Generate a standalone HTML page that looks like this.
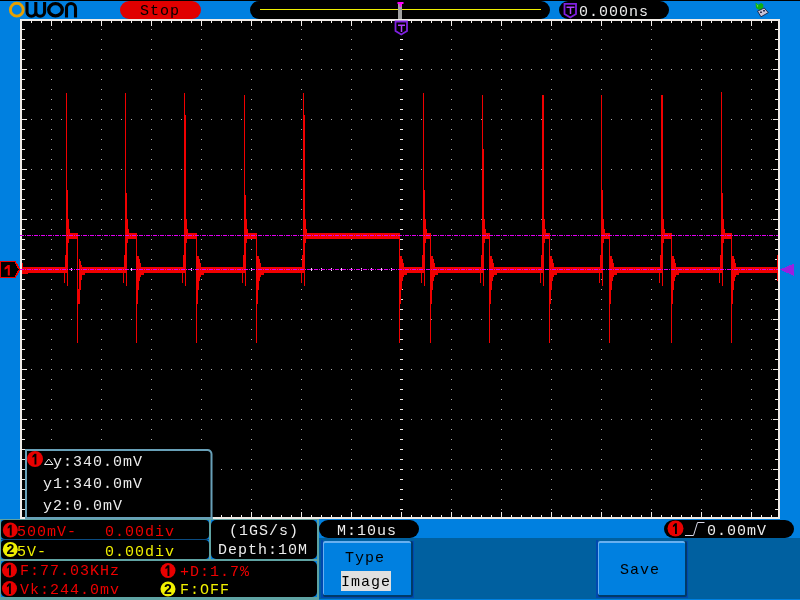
<!DOCTYPE html>
<html><head><meta charset="utf-8"><style>
html,body{margin:0;padding:0;}
body{width:800px;height:600px;overflow:hidden;background:#0080e0;position:relative;}
svg{position:absolute;left:0;top:0;}
text{font-family:"Liberation Mono",monospace;}
</style></head><body>
<svg width="800" height="600" viewBox="0 0 800 600" shape-rendering="crispEdges"><rect x="22" y="21" width="756" height="496" fill="#000" /><rect x="20" y="19" width="760" height="2" fill="#f0ece8" /><rect x="20" y="19" width="2" height="500" fill="#f0ece8" /><rect x="778" y="19" width="2" height="500" fill="#f0ece8" /><rect x="20" y="517" width="760" height="2" fill="#f0ece8" /><path d="M31 69h1v1h-1zM31 119h1v1h-1zM31 169h1v1h-1zM31 219h1v1h-1zM31 319h1v1h-1zM31 369h1v1h-1zM31 419h1v1h-1zM31 469h1v1h-1zM41 69h1v1h-1zM41 119h1v1h-1zM41 169h1v1h-1zM41 219h1v1h-1zM41 319h1v1h-1zM41 369h1v1h-1zM41 419h1v1h-1zM41 469h1v1h-1zM51 29h1v1h-1zM51 39h1v1h-1zM51 49h1v1h-1zM51 59h1v1h-1zM51 69h1v1h-1zM51 79h1v1h-1zM51 89h1v1h-1zM51 99h1v1h-1zM51 109h1v1h-1zM51 119h1v1h-1zM51 129h1v1h-1zM51 139h1v1h-1zM51 149h1v1h-1zM51 159h1v1h-1zM51 169h1v1h-1zM51 179h1v1h-1zM51 189h1v1h-1zM51 199h1v1h-1zM51 209h1v1h-1zM51 219h1v1h-1zM51 229h1v1h-1zM51 239h1v1h-1zM51 249h1v1h-1zM51 259h1v1h-1zM51 279h1v1h-1zM51 289h1v1h-1zM51 299h1v1h-1zM51 309h1v1h-1zM51 319h1v1h-1zM51 329h1v1h-1zM51 339h1v1h-1zM51 349h1v1h-1zM51 359h1v1h-1zM51 369h1v1h-1zM51 379h1v1h-1zM51 389h1v1h-1zM51 399h1v1h-1zM51 409h1v1h-1zM51 419h1v1h-1zM51 429h1v1h-1zM51 439h1v1h-1zM51 449h1v1h-1zM51 459h1v1h-1zM51 469h1v1h-1zM51 479h1v1h-1zM51 489h1v1h-1zM51 499h1v1h-1zM51 509h1v1h-1zM61 69h1v1h-1zM61 119h1v1h-1zM61 169h1v1h-1zM61 219h1v1h-1zM61 319h1v1h-1zM61 369h1v1h-1zM61 419h1v1h-1zM61 469h1v1h-1zM71 69h1v1h-1zM71 119h1v1h-1zM71 169h1v1h-1zM71 219h1v1h-1zM71 319h1v1h-1zM71 369h1v1h-1zM71 419h1v1h-1zM71 469h1v1h-1zM81 69h1v1h-1zM81 119h1v1h-1zM81 169h1v1h-1zM81 219h1v1h-1zM81 319h1v1h-1zM81 369h1v1h-1zM81 419h1v1h-1zM81 469h1v1h-1zM91 69h1v1h-1zM91 119h1v1h-1zM91 169h1v1h-1zM91 219h1v1h-1zM91 319h1v1h-1zM91 369h1v1h-1zM91 419h1v1h-1zM91 469h1v1h-1zM101 29h1v1h-1zM101 39h1v1h-1zM101 49h1v1h-1zM101 59h1v1h-1zM101 69h1v1h-1zM101 79h1v1h-1zM101 89h1v1h-1zM101 99h1v1h-1zM101 109h1v1h-1zM101 119h1v1h-1zM101 129h1v1h-1zM101 139h1v1h-1zM101 149h1v1h-1zM101 159h1v1h-1zM101 169h1v1h-1zM101 179h1v1h-1zM101 189h1v1h-1zM101 199h1v1h-1zM101 209h1v1h-1zM101 219h1v1h-1zM101 229h1v1h-1zM101 239h1v1h-1zM101 249h1v1h-1zM101 259h1v1h-1zM101 279h1v1h-1zM101 289h1v1h-1zM101 299h1v1h-1zM101 309h1v1h-1zM101 319h1v1h-1zM101 329h1v1h-1zM101 339h1v1h-1zM101 349h1v1h-1zM101 359h1v1h-1zM101 369h1v1h-1zM101 379h1v1h-1zM101 389h1v1h-1zM101 399h1v1h-1zM101 409h1v1h-1zM101 419h1v1h-1zM101 429h1v1h-1zM101 439h1v1h-1zM101 449h1v1h-1zM101 459h1v1h-1zM101 469h1v1h-1zM101 479h1v1h-1zM101 489h1v1h-1zM101 499h1v1h-1zM101 509h1v1h-1zM111 69h1v1h-1zM111 119h1v1h-1zM111 169h1v1h-1zM111 219h1v1h-1zM111 319h1v1h-1zM111 369h1v1h-1zM111 419h1v1h-1zM111 469h1v1h-1zM121 69h1v1h-1zM121 119h1v1h-1zM121 169h1v1h-1zM121 219h1v1h-1zM121 319h1v1h-1zM121 369h1v1h-1zM121 419h1v1h-1zM121 469h1v1h-1zM131 69h1v1h-1zM131 119h1v1h-1zM131 169h1v1h-1zM131 219h1v1h-1zM131 319h1v1h-1zM131 369h1v1h-1zM131 419h1v1h-1zM131 469h1v1h-1zM141 69h1v1h-1zM141 119h1v1h-1zM141 169h1v1h-1zM141 219h1v1h-1zM141 319h1v1h-1zM141 369h1v1h-1zM141 419h1v1h-1zM141 469h1v1h-1zM151 29h1v1h-1zM151 39h1v1h-1zM151 49h1v1h-1zM151 59h1v1h-1zM151 69h1v1h-1zM151 79h1v1h-1zM151 89h1v1h-1zM151 99h1v1h-1zM151 109h1v1h-1zM151 119h1v1h-1zM151 129h1v1h-1zM151 139h1v1h-1zM151 149h1v1h-1zM151 159h1v1h-1zM151 169h1v1h-1zM151 179h1v1h-1zM151 189h1v1h-1zM151 199h1v1h-1zM151 209h1v1h-1zM151 219h1v1h-1zM151 229h1v1h-1zM151 239h1v1h-1zM151 249h1v1h-1zM151 259h1v1h-1zM151 279h1v1h-1zM151 289h1v1h-1zM151 299h1v1h-1zM151 309h1v1h-1zM151 319h1v1h-1zM151 329h1v1h-1zM151 339h1v1h-1zM151 349h1v1h-1zM151 359h1v1h-1zM151 369h1v1h-1zM151 379h1v1h-1zM151 389h1v1h-1zM151 399h1v1h-1zM151 409h1v1h-1zM151 419h1v1h-1zM151 429h1v1h-1zM151 439h1v1h-1zM151 449h1v1h-1zM151 459h1v1h-1zM151 469h1v1h-1zM151 479h1v1h-1zM151 489h1v1h-1zM151 499h1v1h-1zM151 509h1v1h-1zM161 69h1v1h-1zM161 119h1v1h-1zM161 169h1v1h-1zM161 219h1v1h-1zM161 319h1v1h-1zM161 369h1v1h-1zM161 419h1v1h-1zM161 469h1v1h-1zM171 69h1v1h-1zM171 119h1v1h-1zM171 169h1v1h-1zM171 219h1v1h-1zM171 319h1v1h-1zM171 369h1v1h-1zM171 419h1v1h-1zM171 469h1v1h-1zM181 69h1v1h-1zM181 119h1v1h-1zM181 169h1v1h-1zM181 219h1v1h-1zM181 319h1v1h-1zM181 369h1v1h-1zM181 419h1v1h-1zM181 469h1v1h-1zM191 69h1v1h-1zM191 119h1v1h-1zM191 169h1v1h-1zM191 219h1v1h-1zM191 319h1v1h-1zM191 369h1v1h-1zM191 419h1v1h-1zM191 469h1v1h-1zM201 29h1v1h-1zM201 39h1v1h-1zM201 49h1v1h-1zM201 59h1v1h-1zM201 69h1v1h-1zM201 79h1v1h-1zM201 89h1v1h-1zM201 99h1v1h-1zM201 109h1v1h-1zM201 119h1v1h-1zM201 129h1v1h-1zM201 139h1v1h-1zM201 149h1v1h-1zM201 159h1v1h-1zM201 169h1v1h-1zM201 179h1v1h-1zM201 189h1v1h-1zM201 199h1v1h-1zM201 209h1v1h-1zM201 219h1v1h-1zM201 229h1v1h-1zM201 239h1v1h-1zM201 249h1v1h-1zM201 259h1v1h-1zM201 279h1v1h-1zM201 289h1v1h-1zM201 299h1v1h-1zM201 309h1v1h-1zM201 319h1v1h-1zM201 329h1v1h-1zM201 339h1v1h-1zM201 349h1v1h-1zM201 359h1v1h-1zM201 369h1v1h-1zM201 379h1v1h-1zM201 389h1v1h-1zM201 399h1v1h-1zM201 409h1v1h-1zM201 419h1v1h-1zM201 429h1v1h-1zM201 439h1v1h-1zM201 449h1v1h-1zM201 459h1v1h-1zM201 469h1v1h-1zM201 479h1v1h-1zM201 489h1v1h-1zM201 499h1v1h-1zM201 509h1v1h-1zM211 69h1v1h-1zM211 119h1v1h-1zM211 169h1v1h-1zM211 219h1v1h-1zM211 319h1v1h-1zM211 369h1v1h-1zM211 419h1v1h-1zM211 469h1v1h-1zM221 69h1v1h-1zM221 119h1v1h-1zM221 169h1v1h-1zM221 219h1v1h-1zM221 319h1v1h-1zM221 369h1v1h-1zM221 419h1v1h-1zM221 469h1v1h-1zM231 69h1v1h-1zM231 119h1v1h-1zM231 169h1v1h-1zM231 219h1v1h-1zM231 319h1v1h-1zM231 369h1v1h-1zM231 419h1v1h-1zM231 469h1v1h-1zM241 69h1v1h-1zM241 119h1v1h-1zM241 169h1v1h-1zM241 219h1v1h-1zM241 319h1v1h-1zM241 369h1v1h-1zM241 419h1v1h-1zM241 469h1v1h-1zM251 29h1v1h-1zM251 39h1v1h-1zM251 49h1v1h-1zM251 59h1v1h-1zM251 69h1v1h-1zM251 79h1v1h-1zM251 89h1v1h-1zM251 99h1v1h-1zM251 109h1v1h-1zM251 119h1v1h-1zM251 129h1v1h-1zM251 139h1v1h-1zM251 149h1v1h-1zM251 159h1v1h-1zM251 169h1v1h-1zM251 179h1v1h-1zM251 189h1v1h-1zM251 199h1v1h-1zM251 209h1v1h-1zM251 219h1v1h-1zM251 229h1v1h-1zM251 239h1v1h-1zM251 249h1v1h-1zM251 259h1v1h-1zM251 279h1v1h-1zM251 289h1v1h-1zM251 299h1v1h-1zM251 309h1v1h-1zM251 319h1v1h-1zM251 329h1v1h-1zM251 339h1v1h-1zM251 349h1v1h-1zM251 359h1v1h-1zM251 369h1v1h-1zM251 379h1v1h-1zM251 389h1v1h-1zM251 399h1v1h-1zM251 409h1v1h-1zM251 419h1v1h-1zM251 429h1v1h-1zM251 439h1v1h-1zM251 449h1v1h-1zM251 459h1v1h-1zM251 469h1v1h-1zM251 479h1v1h-1zM251 489h1v1h-1zM251 499h1v1h-1zM251 509h1v1h-1zM261 69h1v1h-1zM261 119h1v1h-1zM261 169h1v1h-1zM261 219h1v1h-1zM261 319h1v1h-1zM261 369h1v1h-1zM261 419h1v1h-1zM261 469h1v1h-1zM271 69h1v1h-1zM271 119h1v1h-1zM271 169h1v1h-1zM271 219h1v1h-1zM271 319h1v1h-1zM271 369h1v1h-1zM271 419h1v1h-1zM271 469h1v1h-1zM281 69h1v1h-1zM281 119h1v1h-1zM281 169h1v1h-1zM281 219h1v1h-1zM281 319h1v1h-1zM281 369h1v1h-1zM281 419h1v1h-1zM281 469h1v1h-1zM291 69h1v1h-1zM291 119h1v1h-1zM291 169h1v1h-1zM291 219h1v1h-1zM291 319h1v1h-1zM291 369h1v1h-1zM291 419h1v1h-1zM291 469h1v1h-1zM301 29h1v1h-1zM301 39h1v1h-1zM301 49h1v1h-1zM301 59h1v1h-1zM301 69h1v1h-1zM301 79h1v1h-1zM301 89h1v1h-1zM301 99h1v1h-1zM301 109h1v1h-1zM301 119h1v1h-1zM301 129h1v1h-1zM301 139h1v1h-1zM301 149h1v1h-1zM301 159h1v1h-1zM301 169h1v1h-1zM301 179h1v1h-1zM301 189h1v1h-1zM301 199h1v1h-1zM301 209h1v1h-1zM301 219h1v1h-1zM301 229h1v1h-1zM301 239h1v1h-1zM301 249h1v1h-1zM301 259h1v1h-1zM301 279h1v1h-1zM301 289h1v1h-1zM301 299h1v1h-1zM301 309h1v1h-1zM301 319h1v1h-1zM301 329h1v1h-1zM301 339h1v1h-1zM301 349h1v1h-1zM301 359h1v1h-1zM301 369h1v1h-1zM301 379h1v1h-1zM301 389h1v1h-1zM301 399h1v1h-1zM301 409h1v1h-1zM301 419h1v1h-1zM301 429h1v1h-1zM301 439h1v1h-1zM301 449h1v1h-1zM301 459h1v1h-1zM301 469h1v1h-1zM301 479h1v1h-1zM301 489h1v1h-1zM301 499h1v1h-1zM301 509h1v1h-1zM311 69h1v1h-1zM311 119h1v1h-1zM311 169h1v1h-1zM311 219h1v1h-1zM311 319h1v1h-1zM311 369h1v1h-1zM311 419h1v1h-1zM311 469h1v1h-1zM321 69h1v1h-1zM321 119h1v1h-1zM321 169h1v1h-1zM321 219h1v1h-1zM321 319h1v1h-1zM321 369h1v1h-1zM321 419h1v1h-1zM321 469h1v1h-1zM331 69h1v1h-1zM331 119h1v1h-1zM331 169h1v1h-1zM331 219h1v1h-1zM331 319h1v1h-1zM331 369h1v1h-1zM331 419h1v1h-1zM331 469h1v1h-1zM341 69h1v1h-1zM341 119h1v1h-1zM341 169h1v1h-1zM341 219h1v1h-1zM341 319h1v1h-1zM341 369h1v1h-1zM341 419h1v1h-1zM341 469h1v1h-1zM351 29h1v1h-1zM351 39h1v1h-1zM351 49h1v1h-1zM351 59h1v1h-1zM351 69h1v1h-1zM351 79h1v1h-1zM351 89h1v1h-1zM351 99h1v1h-1zM351 109h1v1h-1zM351 119h1v1h-1zM351 129h1v1h-1zM351 139h1v1h-1zM351 149h1v1h-1zM351 159h1v1h-1zM351 169h1v1h-1zM351 179h1v1h-1zM351 189h1v1h-1zM351 199h1v1h-1zM351 209h1v1h-1zM351 219h1v1h-1zM351 229h1v1h-1zM351 239h1v1h-1zM351 249h1v1h-1zM351 259h1v1h-1zM351 279h1v1h-1zM351 289h1v1h-1zM351 299h1v1h-1zM351 309h1v1h-1zM351 319h1v1h-1zM351 329h1v1h-1zM351 339h1v1h-1zM351 349h1v1h-1zM351 359h1v1h-1zM351 369h1v1h-1zM351 379h1v1h-1zM351 389h1v1h-1zM351 399h1v1h-1zM351 409h1v1h-1zM351 419h1v1h-1zM351 429h1v1h-1zM351 439h1v1h-1zM351 449h1v1h-1zM351 459h1v1h-1zM351 469h1v1h-1zM351 479h1v1h-1zM351 489h1v1h-1zM351 499h1v1h-1zM351 509h1v1h-1zM361 69h1v1h-1zM361 119h1v1h-1zM361 169h1v1h-1zM361 219h1v1h-1zM361 319h1v1h-1zM361 369h1v1h-1zM361 419h1v1h-1zM361 469h1v1h-1zM371 69h1v1h-1zM371 119h1v1h-1zM371 169h1v1h-1zM371 219h1v1h-1zM371 319h1v1h-1zM371 369h1v1h-1zM371 419h1v1h-1zM371 469h1v1h-1zM381 69h1v1h-1zM381 119h1v1h-1zM381 169h1v1h-1zM381 219h1v1h-1zM381 319h1v1h-1zM381 369h1v1h-1zM381 419h1v1h-1zM381 469h1v1h-1zM391 69h1v1h-1zM391 119h1v1h-1zM391 169h1v1h-1zM391 219h1v1h-1zM391 319h1v1h-1zM391 369h1v1h-1zM391 419h1v1h-1zM391 469h1v1h-1zM411 69h1v1h-1zM411 119h1v1h-1zM411 169h1v1h-1zM411 219h1v1h-1zM411 319h1v1h-1zM411 369h1v1h-1zM411 419h1v1h-1zM411 469h1v1h-1zM421 69h1v1h-1zM421 119h1v1h-1zM421 169h1v1h-1zM421 219h1v1h-1zM421 319h1v1h-1zM421 369h1v1h-1zM421 419h1v1h-1zM421 469h1v1h-1zM431 69h1v1h-1zM431 119h1v1h-1zM431 169h1v1h-1zM431 219h1v1h-1zM431 319h1v1h-1zM431 369h1v1h-1zM431 419h1v1h-1zM431 469h1v1h-1zM441 69h1v1h-1zM441 119h1v1h-1zM441 169h1v1h-1zM441 219h1v1h-1zM441 319h1v1h-1zM441 369h1v1h-1zM441 419h1v1h-1zM441 469h1v1h-1zM451 29h1v1h-1zM451 39h1v1h-1zM451 49h1v1h-1zM451 59h1v1h-1zM451 69h1v1h-1zM451 79h1v1h-1zM451 89h1v1h-1zM451 99h1v1h-1zM451 109h1v1h-1zM451 119h1v1h-1zM451 129h1v1h-1zM451 139h1v1h-1zM451 149h1v1h-1zM451 159h1v1h-1zM451 169h1v1h-1zM451 179h1v1h-1zM451 189h1v1h-1zM451 199h1v1h-1zM451 209h1v1h-1zM451 219h1v1h-1zM451 229h1v1h-1zM451 239h1v1h-1zM451 249h1v1h-1zM451 259h1v1h-1zM451 279h1v1h-1zM451 289h1v1h-1zM451 299h1v1h-1zM451 309h1v1h-1zM451 319h1v1h-1zM451 329h1v1h-1zM451 339h1v1h-1zM451 349h1v1h-1zM451 359h1v1h-1zM451 369h1v1h-1zM451 379h1v1h-1zM451 389h1v1h-1zM451 399h1v1h-1zM451 409h1v1h-1zM451 419h1v1h-1zM451 429h1v1h-1zM451 439h1v1h-1zM451 449h1v1h-1zM451 459h1v1h-1zM451 469h1v1h-1zM451 479h1v1h-1zM451 489h1v1h-1zM451 499h1v1h-1zM451 509h1v1h-1zM461 69h1v1h-1zM461 119h1v1h-1zM461 169h1v1h-1zM461 219h1v1h-1zM461 319h1v1h-1zM461 369h1v1h-1zM461 419h1v1h-1zM461 469h1v1h-1zM471 69h1v1h-1zM471 119h1v1h-1zM471 169h1v1h-1zM471 219h1v1h-1zM471 319h1v1h-1zM471 369h1v1h-1zM471 419h1v1h-1zM471 469h1v1h-1zM481 69h1v1h-1zM481 119h1v1h-1zM481 169h1v1h-1zM481 219h1v1h-1zM481 319h1v1h-1zM481 369h1v1h-1zM481 419h1v1h-1zM481 469h1v1h-1zM491 69h1v1h-1zM491 119h1v1h-1zM491 169h1v1h-1zM491 219h1v1h-1zM491 319h1v1h-1zM491 369h1v1h-1zM491 419h1v1h-1zM491 469h1v1h-1zM501 29h1v1h-1zM501 39h1v1h-1zM501 49h1v1h-1zM501 59h1v1h-1zM501 69h1v1h-1zM501 79h1v1h-1zM501 89h1v1h-1zM501 99h1v1h-1zM501 109h1v1h-1zM501 119h1v1h-1zM501 129h1v1h-1zM501 139h1v1h-1zM501 149h1v1h-1zM501 159h1v1h-1zM501 169h1v1h-1zM501 179h1v1h-1zM501 189h1v1h-1zM501 199h1v1h-1zM501 209h1v1h-1zM501 219h1v1h-1zM501 229h1v1h-1zM501 239h1v1h-1zM501 249h1v1h-1zM501 259h1v1h-1zM501 279h1v1h-1zM501 289h1v1h-1zM501 299h1v1h-1zM501 309h1v1h-1zM501 319h1v1h-1zM501 329h1v1h-1zM501 339h1v1h-1zM501 349h1v1h-1zM501 359h1v1h-1zM501 369h1v1h-1zM501 379h1v1h-1zM501 389h1v1h-1zM501 399h1v1h-1zM501 409h1v1h-1zM501 419h1v1h-1zM501 429h1v1h-1zM501 439h1v1h-1zM501 449h1v1h-1zM501 459h1v1h-1zM501 469h1v1h-1zM501 479h1v1h-1zM501 489h1v1h-1zM501 499h1v1h-1zM501 509h1v1h-1zM511 69h1v1h-1zM511 119h1v1h-1zM511 169h1v1h-1zM511 219h1v1h-1zM511 319h1v1h-1zM511 369h1v1h-1zM511 419h1v1h-1zM511 469h1v1h-1zM521 69h1v1h-1zM521 119h1v1h-1zM521 169h1v1h-1zM521 219h1v1h-1zM521 319h1v1h-1zM521 369h1v1h-1zM521 419h1v1h-1zM521 469h1v1h-1zM531 69h1v1h-1zM531 119h1v1h-1zM531 169h1v1h-1zM531 219h1v1h-1zM531 319h1v1h-1zM531 369h1v1h-1zM531 419h1v1h-1zM531 469h1v1h-1zM541 69h1v1h-1zM541 119h1v1h-1zM541 169h1v1h-1zM541 219h1v1h-1zM541 319h1v1h-1zM541 369h1v1h-1zM541 419h1v1h-1zM541 469h1v1h-1zM551 29h1v1h-1zM551 39h1v1h-1zM551 49h1v1h-1zM551 59h1v1h-1zM551 69h1v1h-1zM551 79h1v1h-1zM551 89h1v1h-1zM551 99h1v1h-1zM551 109h1v1h-1zM551 119h1v1h-1zM551 129h1v1h-1zM551 139h1v1h-1zM551 149h1v1h-1zM551 159h1v1h-1zM551 169h1v1h-1zM551 179h1v1h-1zM551 189h1v1h-1zM551 199h1v1h-1zM551 209h1v1h-1zM551 219h1v1h-1zM551 229h1v1h-1zM551 239h1v1h-1zM551 249h1v1h-1zM551 259h1v1h-1zM551 279h1v1h-1zM551 289h1v1h-1zM551 299h1v1h-1zM551 309h1v1h-1zM551 319h1v1h-1zM551 329h1v1h-1zM551 339h1v1h-1zM551 349h1v1h-1zM551 359h1v1h-1zM551 369h1v1h-1zM551 379h1v1h-1zM551 389h1v1h-1zM551 399h1v1h-1zM551 409h1v1h-1zM551 419h1v1h-1zM551 429h1v1h-1zM551 439h1v1h-1zM551 449h1v1h-1zM551 459h1v1h-1zM551 469h1v1h-1zM551 479h1v1h-1zM551 489h1v1h-1zM551 499h1v1h-1zM551 509h1v1h-1zM561 69h1v1h-1zM561 119h1v1h-1zM561 169h1v1h-1zM561 219h1v1h-1zM561 319h1v1h-1zM561 369h1v1h-1zM561 419h1v1h-1zM561 469h1v1h-1zM571 69h1v1h-1zM571 119h1v1h-1zM571 169h1v1h-1zM571 219h1v1h-1zM571 319h1v1h-1zM571 369h1v1h-1zM571 419h1v1h-1zM571 469h1v1h-1zM581 69h1v1h-1zM581 119h1v1h-1zM581 169h1v1h-1zM581 219h1v1h-1zM581 319h1v1h-1zM581 369h1v1h-1zM581 419h1v1h-1zM581 469h1v1h-1zM591 69h1v1h-1zM591 119h1v1h-1zM591 169h1v1h-1zM591 219h1v1h-1zM591 319h1v1h-1zM591 369h1v1h-1zM591 419h1v1h-1zM591 469h1v1h-1zM601 29h1v1h-1zM601 39h1v1h-1zM601 49h1v1h-1zM601 59h1v1h-1zM601 69h1v1h-1zM601 79h1v1h-1zM601 89h1v1h-1zM601 99h1v1h-1zM601 109h1v1h-1zM601 119h1v1h-1zM601 129h1v1h-1zM601 139h1v1h-1zM601 149h1v1h-1zM601 159h1v1h-1zM601 169h1v1h-1zM601 179h1v1h-1zM601 189h1v1h-1zM601 199h1v1h-1zM601 209h1v1h-1zM601 219h1v1h-1zM601 229h1v1h-1zM601 239h1v1h-1zM601 249h1v1h-1zM601 259h1v1h-1zM601 279h1v1h-1zM601 289h1v1h-1zM601 299h1v1h-1zM601 309h1v1h-1zM601 319h1v1h-1zM601 329h1v1h-1zM601 339h1v1h-1zM601 349h1v1h-1zM601 359h1v1h-1zM601 369h1v1h-1zM601 379h1v1h-1zM601 389h1v1h-1zM601 399h1v1h-1zM601 409h1v1h-1zM601 419h1v1h-1zM601 429h1v1h-1zM601 439h1v1h-1zM601 449h1v1h-1zM601 459h1v1h-1zM601 469h1v1h-1zM601 479h1v1h-1zM601 489h1v1h-1zM601 499h1v1h-1zM601 509h1v1h-1zM611 69h1v1h-1zM611 119h1v1h-1zM611 169h1v1h-1zM611 219h1v1h-1zM611 319h1v1h-1zM611 369h1v1h-1zM611 419h1v1h-1zM611 469h1v1h-1zM621 69h1v1h-1zM621 119h1v1h-1zM621 169h1v1h-1zM621 219h1v1h-1zM621 319h1v1h-1zM621 369h1v1h-1zM621 419h1v1h-1zM621 469h1v1h-1zM631 69h1v1h-1zM631 119h1v1h-1zM631 169h1v1h-1zM631 219h1v1h-1zM631 319h1v1h-1zM631 369h1v1h-1zM631 419h1v1h-1zM631 469h1v1h-1zM641 69h1v1h-1zM641 119h1v1h-1zM641 169h1v1h-1zM641 219h1v1h-1zM641 319h1v1h-1zM641 369h1v1h-1zM641 419h1v1h-1zM641 469h1v1h-1zM651 29h1v1h-1zM651 39h1v1h-1zM651 49h1v1h-1zM651 59h1v1h-1zM651 69h1v1h-1zM651 79h1v1h-1zM651 89h1v1h-1zM651 99h1v1h-1zM651 109h1v1h-1zM651 119h1v1h-1zM651 129h1v1h-1zM651 139h1v1h-1zM651 149h1v1h-1zM651 159h1v1h-1zM651 169h1v1h-1zM651 179h1v1h-1zM651 189h1v1h-1zM651 199h1v1h-1zM651 209h1v1h-1zM651 219h1v1h-1zM651 229h1v1h-1zM651 239h1v1h-1zM651 249h1v1h-1zM651 259h1v1h-1zM651 279h1v1h-1zM651 289h1v1h-1zM651 299h1v1h-1zM651 309h1v1h-1zM651 319h1v1h-1zM651 329h1v1h-1zM651 339h1v1h-1zM651 349h1v1h-1zM651 359h1v1h-1zM651 369h1v1h-1zM651 379h1v1h-1zM651 389h1v1h-1zM651 399h1v1h-1zM651 409h1v1h-1zM651 419h1v1h-1zM651 429h1v1h-1zM651 439h1v1h-1zM651 449h1v1h-1zM651 459h1v1h-1zM651 469h1v1h-1zM651 479h1v1h-1zM651 489h1v1h-1zM651 499h1v1h-1zM651 509h1v1h-1zM661 69h1v1h-1zM661 119h1v1h-1zM661 169h1v1h-1zM661 219h1v1h-1zM661 319h1v1h-1zM661 369h1v1h-1zM661 419h1v1h-1zM661 469h1v1h-1zM671 69h1v1h-1zM671 119h1v1h-1zM671 169h1v1h-1zM671 219h1v1h-1zM671 319h1v1h-1zM671 369h1v1h-1zM671 419h1v1h-1zM671 469h1v1h-1zM681 69h1v1h-1zM681 119h1v1h-1zM681 169h1v1h-1zM681 219h1v1h-1zM681 319h1v1h-1zM681 369h1v1h-1zM681 419h1v1h-1zM681 469h1v1h-1zM691 69h1v1h-1zM691 119h1v1h-1zM691 169h1v1h-1zM691 219h1v1h-1zM691 319h1v1h-1zM691 369h1v1h-1zM691 419h1v1h-1zM691 469h1v1h-1zM701 29h1v1h-1zM701 39h1v1h-1zM701 49h1v1h-1zM701 59h1v1h-1zM701 69h1v1h-1zM701 79h1v1h-1zM701 89h1v1h-1zM701 99h1v1h-1zM701 109h1v1h-1zM701 119h1v1h-1zM701 129h1v1h-1zM701 139h1v1h-1zM701 149h1v1h-1zM701 159h1v1h-1zM701 169h1v1h-1zM701 179h1v1h-1zM701 189h1v1h-1zM701 199h1v1h-1zM701 209h1v1h-1zM701 219h1v1h-1zM701 229h1v1h-1zM701 239h1v1h-1zM701 249h1v1h-1zM701 259h1v1h-1zM701 279h1v1h-1zM701 289h1v1h-1zM701 299h1v1h-1zM701 309h1v1h-1zM701 319h1v1h-1zM701 329h1v1h-1zM701 339h1v1h-1zM701 349h1v1h-1zM701 359h1v1h-1zM701 369h1v1h-1zM701 379h1v1h-1zM701 389h1v1h-1zM701 399h1v1h-1zM701 409h1v1h-1zM701 419h1v1h-1zM701 429h1v1h-1zM701 439h1v1h-1zM701 449h1v1h-1zM701 459h1v1h-1zM701 469h1v1h-1zM701 479h1v1h-1zM701 489h1v1h-1zM701 499h1v1h-1zM701 509h1v1h-1zM711 69h1v1h-1zM711 119h1v1h-1zM711 169h1v1h-1zM711 219h1v1h-1zM711 319h1v1h-1zM711 369h1v1h-1zM711 419h1v1h-1zM711 469h1v1h-1zM721 69h1v1h-1zM721 119h1v1h-1zM721 169h1v1h-1zM721 219h1v1h-1zM721 319h1v1h-1zM721 369h1v1h-1zM721 419h1v1h-1zM721 469h1v1h-1zM731 69h1v1h-1zM731 119h1v1h-1zM731 169h1v1h-1zM731 219h1v1h-1zM731 319h1v1h-1zM731 369h1v1h-1zM731 419h1v1h-1zM731 469h1v1h-1zM741 69h1v1h-1zM741 119h1v1h-1zM741 169h1v1h-1zM741 219h1v1h-1zM741 319h1v1h-1zM741 369h1v1h-1zM741 419h1v1h-1zM741 469h1v1h-1zM751 29h1v1h-1zM751 39h1v1h-1zM751 49h1v1h-1zM751 59h1v1h-1zM751 69h1v1h-1zM751 79h1v1h-1zM751 89h1v1h-1zM751 99h1v1h-1zM751 109h1v1h-1zM751 119h1v1h-1zM751 129h1v1h-1zM751 139h1v1h-1zM751 149h1v1h-1zM751 159h1v1h-1zM751 169h1v1h-1zM751 179h1v1h-1zM751 189h1v1h-1zM751 199h1v1h-1zM751 209h1v1h-1zM751 219h1v1h-1zM751 229h1v1h-1zM751 239h1v1h-1zM751 249h1v1h-1zM751 259h1v1h-1zM751 279h1v1h-1zM751 289h1v1h-1zM751 299h1v1h-1zM751 309h1v1h-1zM751 319h1v1h-1zM751 329h1v1h-1zM751 339h1v1h-1zM751 349h1v1h-1zM751 359h1v1h-1zM751 369h1v1h-1zM751 379h1v1h-1zM751 389h1v1h-1zM751 399h1v1h-1zM751 409h1v1h-1zM751 419h1v1h-1zM751 429h1v1h-1zM751 439h1v1h-1zM751 449h1v1h-1zM751 459h1v1h-1zM751 469h1v1h-1zM751 479h1v1h-1zM751 489h1v1h-1zM751 499h1v1h-1zM751 509h1v1h-1zM761 69h1v1h-1zM761 119h1v1h-1zM761 169h1v1h-1zM761 219h1v1h-1zM761 319h1v1h-1zM761 369h1v1h-1zM761 419h1v1h-1zM761 469h1v1h-1zM771 69h1v1h-1zM771 119h1v1h-1zM771 169h1v1h-1zM771 219h1v1h-1zM771 319h1v1h-1zM771 369h1v1h-1zM771 419h1v1h-1zM771 469h1v1h-1z" fill="#a8a8a8"/><path d="M31 21h1v2h-1zM31 515h1v2h-1zM41 21h1v2h-1zM41 515h1v2h-1zM51 21h1v5h-1zM51 512h1v5h-1zM61 21h1v2h-1zM61 515h1v2h-1zM71 21h1v2h-1zM71 515h1v2h-1zM81 21h1v2h-1zM81 515h1v2h-1zM91 21h1v2h-1zM91 515h1v2h-1zM101 21h1v5h-1zM101 512h1v5h-1zM111 21h1v2h-1zM111 515h1v2h-1zM121 21h1v2h-1zM121 515h1v2h-1zM131 21h1v2h-1zM131 515h1v2h-1zM141 21h1v2h-1zM141 515h1v2h-1zM151 21h1v5h-1zM151 512h1v5h-1zM161 21h1v2h-1zM161 515h1v2h-1zM171 21h1v2h-1zM171 515h1v2h-1zM181 21h1v2h-1zM181 515h1v2h-1zM191 21h1v2h-1zM191 515h1v2h-1zM201 21h1v5h-1zM201 512h1v5h-1zM211 21h1v2h-1zM211 515h1v2h-1zM221 21h1v2h-1zM221 515h1v2h-1zM231 21h1v2h-1zM231 515h1v2h-1zM241 21h1v2h-1zM241 515h1v2h-1zM251 21h1v5h-1zM251 512h1v5h-1zM261 21h1v2h-1zM261 515h1v2h-1zM271 21h1v2h-1zM271 515h1v2h-1zM281 21h1v2h-1zM281 515h1v2h-1zM291 21h1v2h-1zM291 515h1v2h-1zM301 21h1v5h-1zM301 512h1v5h-1zM311 21h1v2h-1zM311 515h1v2h-1zM321 21h1v2h-1zM321 515h1v2h-1zM331 21h1v2h-1zM331 515h1v2h-1zM341 21h1v2h-1zM341 515h1v2h-1zM351 21h1v5h-1zM351 512h1v5h-1zM361 21h1v2h-1zM361 515h1v2h-1zM371 21h1v2h-1zM371 515h1v2h-1zM381 21h1v2h-1zM381 515h1v2h-1zM391 21h1v2h-1zM391 515h1v2h-1zM401 21h1v5h-1zM401 512h1v5h-1zM411 21h1v2h-1zM411 515h1v2h-1zM421 21h1v2h-1zM421 515h1v2h-1zM431 21h1v2h-1zM431 515h1v2h-1zM441 21h1v2h-1zM441 515h1v2h-1zM451 21h1v5h-1zM451 512h1v5h-1zM461 21h1v2h-1zM461 515h1v2h-1zM471 21h1v2h-1zM471 515h1v2h-1zM481 21h1v2h-1zM481 515h1v2h-1zM491 21h1v2h-1zM491 515h1v2h-1zM501 21h1v5h-1zM501 512h1v5h-1zM511 21h1v2h-1zM511 515h1v2h-1zM521 21h1v2h-1zM521 515h1v2h-1zM531 21h1v2h-1zM531 515h1v2h-1zM541 21h1v2h-1zM541 515h1v2h-1zM551 21h1v5h-1zM551 512h1v5h-1zM561 21h1v2h-1zM561 515h1v2h-1zM571 21h1v2h-1zM571 515h1v2h-1zM581 21h1v2h-1zM581 515h1v2h-1zM591 21h1v2h-1zM591 515h1v2h-1zM601 21h1v5h-1zM601 512h1v5h-1zM611 21h1v2h-1zM611 515h1v2h-1zM621 21h1v2h-1zM621 515h1v2h-1zM631 21h1v2h-1zM631 515h1v2h-1zM641 21h1v2h-1zM641 515h1v2h-1zM651 21h1v5h-1zM651 512h1v5h-1zM661 21h1v2h-1zM661 515h1v2h-1zM671 21h1v2h-1zM671 515h1v2h-1zM681 21h1v2h-1zM681 515h1v2h-1zM691 21h1v2h-1zM691 515h1v2h-1zM701 21h1v5h-1zM701 512h1v5h-1zM711 21h1v2h-1zM711 515h1v2h-1zM721 21h1v2h-1zM721 515h1v2h-1zM731 21h1v2h-1zM731 515h1v2h-1zM741 21h1v2h-1zM741 515h1v2h-1zM751 21h1v5h-1zM751 512h1v5h-1zM761 21h1v2h-1zM761 515h1v2h-1zM771 21h1v2h-1zM771 515h1v2h-1zM22 29h3v1h-3zM775 29h3v1h-3zM22 39h3v1h-3zM775 39h3v1h-3zM22 49h3v1h-3zM775 49h3v1h-3zM22 59h3v1h-3zM775 59h3v1h-3zM22 69h5v1h-5zM773 69h5v1h-5zM22 79h3v1h-3zM775 79h3v1h-3zM22 89h3v1h-3zM775 89h3v1h-3zM22 99h3v1h-3zM775 99h3v1h-3zM22 109h3v1h-3zM775 109h3v1h-3zM22 119h5v1h-5zM773 119h5v1h-5zM22 129h3v1h-3zM775 129h3v1h-3zM22 139h3v1h-3zM775 139h3v1h-3zM22 149h3v1h-3zM775 149h3v1h-3zM22 159h3v1h-3zM775 159h3v1h-3zM22 169h5v1h-5zM773 169h5v1h-5zM22 179h3v1h-3zM775 179h3v1h-3zM22 189h3v1h-3zM775 189h3v1h-3zM22 199h3v1h-3zM775 199h3v1h-3zM22 209h3v1h-3zM775 209h3v1h-3zM22 219h5v1h-5zM773 219h5v1h-5zM22 229h3v1h-3zM775 229h3v1h-3zM22 239h3v1h-3zM775 239h3v1h-3zM22 249h3v1h-3zM775 249h3v1h-3zM22 259h3v1h-3zM775 259h3v1h-3zM22 269h5v1h-5zM773 269h5v1h-5zM22 279h3v1h-3zM775 279h3v1h-3zM22 289h3v1h-3zM775 289h3v1h-3zM22 299h3v1h-3zM775 299h3v1h-3zM22 309h3v1h-3zM775 309h3v1h-3zM22 319h5v1h-5zM773 319h5v1h-5zM22 329h3v1h-3zM775 329h3v1h-3zM22 339h3v1h-3zM775 339h3v1h-3zM22 349h3v1h-3zM775 349h3v1h-3zM22 359h3v1h-3zM775 359h3v1h-3zM22 369h5v1h-5zM773 369h5v1h-5zM22 379h3v1h-3zM775 379h3v1h-3zM22 389h3v1h-3zM775 389h3v1h-3zM22 399h3v1h-3zM775 399h3v1h-3zM22 409h3v1h-3zM775 409h3v1h-3zM22 419h5v1h-5zM773 419h5v1h-5zM22 429h3v1h-3zM775 429h3v1h-3zM22 439h3v1h-3zM775 439h3v1h-3zM22 449h3v1h-3zM775 449h3v1h-3zM22 459h3v1h-3zM775 459h3v1h-3zM22 469h5v1h-5zM773 469h5v1h-5zM22 479h3v1h-3zM775 479h3v1h-3zM22 489h3v1h-3zM775 489h3v1h-3zM22 499h3v1h-3zM775 499h3v1h-3zM22 509h3v1h-3zM775 509h3v1h-3zM400 29h3v1h-3zM400 39h3v1h-3zM400 49h3v1h-3zM400 59h3v1h-3zM400 69h3v1h-3zM400 79h3v1h-3zM400 89h3v1h-3zM400 99h3v1h-3zM400 109h3v1h-3zM400 119h3v1h-3zM400 129h3v1h-3zM400 139h3v1h-3zM400 149h3v1h-3zM400 159h3v1h-3zM400 169h3v1h-3zM400 179h3v1h-3zM400 189h3v1h-3zM400 199h3v1h-3zM400 209h3v1h-3zM400 219h3v1h-3zM400 229h3v1h-3zM400 239h3v1h-3zM400 249h3v1h-3zM400 259h3v1h-3zM400 269h3v1h-3zM400 279h3v1h-3zM400 289h3v1h-3zM400 299h3v1h-3zM400 309h3v1h-3zM400 319h3v1h-3zM400 329h3v1h-3zM400 339h3v1h-3zM400 349h3v1h-3zM400 359h3v1h-3zM400 369h3v1h-3zM400 379h3v1h-3zM400 389h3v1h-3zM400 399h3v1h-3zM400 409h3v1h-3zM400 419h3v1h-3zM400 429h3v1h-3zM400 439h3v1h-3zM400 449h3v1h-3zM400 459h3v1h-3zM400 469h3v1h-3zM400 479h3v1h-3zM400 489h3v1h-3zM400 499h3v1h-3zM400 509h3v1h-3zM31 268h1v3h-1zM41 268h1v3h-1zM51 268h1v3h-1zM61 268h1v3h-1zM71 268h1v3h-1zM81 268h1v3h-1zM91 268h1v3h-1zM101 268h1v3h-1zM111 268h1v3h-1zM121 268h1v3h-1zM131 268h1v3h-1zM141 268h1v3h-1zM151 268h1v3h-1zM161 268h1v3h-1zM171 268h1v3h-1zM181 268h1v3h-1zM191 268h1v3h-1zM201 268h1v3h-1zM211 268h1v3h-1zM221 268h1v3h-1zM231 268h1v3h-1zM241 268h1v3h-1zM251 268h1v3h-1zM261 268h1v3h-1zM271 268h1v3h-1zM281 268h1v3h-1zM291 268h1v3h-1zM301 268h1v3h-1zM311 268h1v3h-1zM321 268h1v3h-1zM331 268h1v3h-1zM341 268h1v3h-1zM351 268h1v3h-1zM361 268h1v3h-1zM371 268h1v3h-1zM381 268h1v3h-1zM391 268h1v3h-1zM401 268h1v3h-1zM411 268h1v3h-1zM421 268h1v3h-1zM431 268h1v3h-1zM441 268h1v3h-1zM451 268h1v3h-1zM461 268h1v3h-1zM471 268h1v3h-1zM481 268h1v3h-1zM491 268h1v3h-1zM501 268h1v3h-1zM511 268h1v3h-1zM521 268h1v3h-1zM531 268h1v3h-1zM541 268h1v3h-1zM551 268h1v3h-1zM561 268h1v3h-1zM571 268h1v3h-1zM581 268h1v3h-1zM591 268h1v3h-1zM601 268h1v3h-1zM611 268h1v3h-1zM621 268h1v3h-1zM631 268h1v3h-1zM641 268h1v3h-1zM651 268h1v3h-1zM661 268h1v3h-1zM671 268h1v3h-1zM681 268h1v3h-1zM691 268h1v3h-1zM701 268h1v3h-1zM711 268h1v3h-1zM721 268h1v3h-1zM731 268h1v3h-1zM741 268h1v3h-1zM751 268h1v3h-1zM761 268h1v3h-1zM771 268h1v3h-1z" fill="#f0ece8"/><path d="M22 267h46v6h-46zM82 267h45v6h-45zM141 267h45v6h-45zM201 267h45v6h-45zM261 267h44v6h-44zM404 267h21v6h-21zM435 267h49v6h-49zM494 267h50v6h-50zM554 267h49v6h-49zM614 267h49v6h-49zM676 267h47v6h-47zM736 267h42v6h-42zM66 93h1v180h-1zM67 190h1v83h-1zM68 219h1v14h-1zM69 229h1v4h-1zM65 255h1v18h-1zM68 238h1v5h-1zM68 233h10v6h-10zM77 233h1v110h-1zM77 289h3v15h-3zM79 259h1v45h-1zM80 261h1v29h-1zM81 265h1v15h-1zM82 273h3v2h-3zM64 273h1v10h-1zM67 273h1v13h-1zM125 93h1v180h-1zM126 193h1v80h-1zM127 219h1v14h-1zM128 229h1v4h-1zM124 255h1v18h-1zM127 238h1v5h-1zM127 233h10v6h-10zM136 233h1v110h-1zM136 256h3v34h-3zM136 290h2v14h-2zM139 259h1v22h-1zM140 263h1v14h-1zM139 273h5v2h-5zM123 273h1v10h-1zM126 273h1v13h-1zM184 93h1v180h-1zM185 115h1v158h-1zM186 219h1v14h-1zM187 229h1v4h-1zM183 255h1v18h-1zM186 238h1v5h-1zM186 233h11v6h-11zM196 233h1v110h-1zM196 256h3v34h-3zM196 290h2v14h-2zM199 259h1v22h-1zM200 263h1v14h-1zM199 273h5v2h-5zM182 273h1v10h-1zM185 273h1v13h-1zM244 95h1v178h-1zM245 195h1v78h-1zM246 219h1v14h-1zM247 229h1v4h-1zM243 255h1v18h-1zM246 238h1v5h-1zM246 233h11v6h-11zM256 233h1v110h-1zM256 256h3v34h-3zM256 290h2v14h-2zM259 259h1v22h-1zM260 263h1v14h-1zM259 273h5v2h-5zM242 273h1v10h-1zM245 273h1v13h-1zM303 93h1v180h-1zM304 115h1v158h-1zM305 219h1v14h-1zM306 229h1v4h-1zM302 255h1v18h-1zM305 238h1v5h-1zM305 233h95v6h-95zM399 233h1v110h-1zM399 256h3v34h-3zM399 290h2v14h-2zM402 259h1v22h-1zM403 263h1v14h-1zM402 273h5v2h-5zM301 273h1v10h-1zM304 273h1v13h-1zM423 93h1v180h-1zM424 190h1v83h-1zM425 219h1v14h-1zM426 229h1v4h-1zM422 255h1v18h-1zM425 238h1v5h-1zM425 233h6v6h-6zM430 233h1v110h-1zM430 256h3v34h-3zM430 290h2v14h-2zM433 259h1v22h-1zM434 263h1v14h-1zM433 273h5v2h-5zM421 273h1v10h-1zM424 273h1v13h-1zM482 95h1v178h-1zM483 149h1v124h-1zM484 219h1v14h-1zM485 229h1v4h-1zM481 255h1v18h-1zM484 238h1v5h-1zM484 233h6v6h-6zM489 233h1v110h-1zM489 256h3v34h-3zM489 290h2v14h-2zM492 259h1v22h-1zM493 263h1v14h-1zM492 273h5v2h-5zM480 273h1v10h-1zM483 273h1v13h-1zM542 95h1v178h-1zM543 95h1v178h-1zM544 219h1v14h-1zM545 229h1v4h-1zM541 255h1v18h-1zM544 238h1v5h-1zM544 233h6v6h-6zM549 233h1v110h-1zM549 256h3v34h-3zM549 290h2v14h-2zM552 259h1v22h-1zM553 263h1v14h-1zM552 273h5v2h-5zM540 273h1v10h-1zM543 273h1v13h-1zM601 95h1v178h-1zM602 190h1v83h-1zM603 219h1v14h-1zM604 229h1v4h-1zM600 255h1v18h-1zM603 238h1v5h-1zM603 233h7v6h-7zM609 233h1v110h-1zM609 256h3v34h-3zM609 290h2v14h-2zM612 259h1v22h-1zM613 263h1v14h-1zM612 273h5v2h-5zM599 273h1v10h-1zM602 273h1v13h-1zM661 95h1v178h-1zM662 95h1v178h-1zM663 219h1v14h-1zM664 229h1v4h-1zM660 255h1v18h-1zM663 238h1v5h-1zM663 233h9v6h-9zM671 233h1v110h-1zM671 256h3v34h-3zM671 290h2v14h-2zM674 259h1v22h-1zM675 263h1v14h-1zM674 273h5v2h-5zM659 273h1v10h-1zM662 273h1v13h-1zM721 92h1v181h-1zM722 193h1v80h-1zM723 219h1v14h-1zM724 229h1v4h-1zM720 255h1v18h-1zM723 238h1v5h-1zM723 233h9v6h-9zM731 233h1v110h-1zM731 256h3v34h-3zM731 290h2v14h-2zM734 259h1v22h-1zM735 263h1v14h-1zM734 273h5v2h-5zM719 273h1v10h-1zM722 273h1v13h-1zM22 263h1v11h-1zM22 273h6v1h-6zM777 255h1v26h-1z" fill="#f00000"/><path d="M20 269h1v1h-1zM21 269h1v1h-1zM22 269h1v1h-1zM23 269h1v1h-1zM25 269h1v1h-1zM27 269h1v1h-1zM28 269h1v1h-1zM29 269h1v1h-1zM30 269h1v1h-1zM32 269h1v1h-1zM34 269h1v1h-1zM35 269h1v1h-1zM36 269h1v1h-1zM37 269h1v1h-1zM39 269h1v1h-1zM41 269h1v1h-1zM42 269h1v1h-1zM43 269h1v1h-1zM44 269h1v1h-1zM46 269h1v1h-1zM48 269h1v1h-1zM49 269h1v1h-1zM50 269h1v1h-1zM51 269h1v1h-1zM53 269h1v1h-1zM55 269h1v1h-1zM56 269h1v1h-1zM57 269h1v1h-1zM58 269h1v1h-1zM60 269h1v1h-1zM62 269h1v1h-1zM63 269h1v1h-1zM64 269h1v1h-1zM65 269h1v1h-1zM67 269h1v1h-1zM69 269h1v1h-1zM70 269h1v1h-1zM71 269h1v1h-1zM72 269h1v1h-1zM74 269h1v1h-1zM76 269h1v1h-1zM77 269h1v1h-1zM78 269h1v1h-1zM79 269h1v1h-1zM81 269h1v1h-1zM83 269h1v1h-1zM84 269h1v1h-1zM85 269h1v1h-1zM86 269h1v1h-1zM88 269h1v1h-1zM90 269h1v1h-1zM91 269h1v1h-1zM92 269h1v1h-1zM93 269h1v1h-1zM95 269h1v1h-1zM97 269h1v1h-1zM98 269h1v1h-1zM99 269h1v1h-1zM100 269h1v1h-1zM102 269h1v1h-1zM104 269h1v1h-1zM105 269h1v1h-1zM106 269h1v1h-1zM107 269h1v1h-1zM109 269h1v1h-1zM111 269h1v1h-1zM112 269h1v1h-1zM113 269h1v1h-1zM114 269h1v1h-1zM116 269h1v1h-1zM118 269h1v1h-1zM119 269h1v1h-1zM120 269h1v1h-1zM121 269h1v1h-1zM123 269h1v1h-1zM125 269h1v1h-1zM126 269h1v1h-1zM127 269h1v1h-1zM128 269h1v1h-1zM130 269h1v1h-1zM132 269h1v1h-1zM133 269h1v1h-1zM134 269h1v1h-1zM135 269h1v1h-1zM137 269h1v1h-1zM139 269h1v1h-1zM140 269h1v1h-1zM141 269h1v1h-1zM142 269h1v1h-1zM144 269h1v1h-1zM146 269h1v1h-1zM147 269h1v1h-1zM148 269h1v1h-1zM149 269h1v1h-1zM151 269h1v1h-1zM153 269h1v1h-1zM154 269h1v1h-1zM155 269h1v1h-1zM156 269h1v1h-1zM158 269h1v1h-1zM160 269h1v1h-1zM161 269h1v1h-1zM162 269h1v1h-1zM163 269h1v1h-1zM165 269h1v1h-1zM167 269h1v1h-1zM168 269h1v1h-1zM169 269h1v1h-1zM170 269h1v1h-1zM172 269h1v1h-1zM174 269h1v1h-1zM175 269h1v1h-1zM176 269h1v1h-1zM177 269h1v1h-1zM179 269h1v1h-1zM181 269h1v1h-1zM182 269h1v1h-1zM183 269h1v1h-1zM184 269h1v1h-1zM186 269h1v1h-1zM188 269h1v1h-1zM189 269h1v1h-1zM190 269h1v1h-1zM191 269h1v1h-1zM193 269h1v1h-1zM195 269h1v1h-1zM196 269h1v1h-1zM197 269h1v1h-1zM198 269h1v1h-1zM200 269h1v1h-1zM202 269h1v1h-1zM203 269h1v1h-1zM204 269h1v1h-1zM205 269h1v1h-1zM207 269h1v1h-1zM209 269h1v1h-1zM210 269h1v1h-1zM211 269h1v1h-1zM212 269h1v1h-1zM214 269h1v1h-1zM216 269h1v1h-1zM217 269h1v1h-1zM218 269h1v1h-1zM219 269h1v1h-1zM221 269h1v1h-1zM223 269h1v1h-1zM224 269h1v1h-1zM225 269h1v1h-1zM226 269h1v1h-1zM228 269h1v1h-1zM230 269h1v1h-1zM231 269h1v1h-1zM232 269h1v1h-1zM233 269h1v1h-1zM235 269h1v1h-1zM237 269h1v1h-1zM238 269h1v1h-1zM239 269h1v1h-1zM240 269h1v1h-1zM242 269h1v1h-1zM244 269h1v1h-1zM245 269h1v1h-1zM246 269h1v1h-1zM247 269h1v1h-1zM249 269h1v1h-1zM251 269h1v1h-1zM252 269h1v1h-1zM253 269h1v1h-1zM254 269h1v1h-1zM256 269h1v1h-1zM258 269h1v1h-1zM259 269h1v1h-1zM260 269h1v1h-1zM261 269h1v1h-1zM263 269h1v1h-1zM265 269h1v1h-1zM266 269h1v1h-1zM267 269h1v1h-1zM268 269h1v1h-1zM270 269h1v1h-1zM272 269h1v1h-1zM273 269h1v1h-1zM274 269h1v1h-1zM275 269h1v1h-1zM277 269h1v1h-1zM279 269h1v1h-1zM280 269h1v1h-1zM281 269h1v1h-1zM282 269h1v1h-1zM284 269h1v1h-1zM286 269h1v1h-1zM287 269h1v1h-1zM288 269h1v1h-1zM289 269h1v1h-1zM291 269h1v1h-1zM293 269h1v1h-1zM294 269h1v1h-1zM295 269h1v1h-1zM296 269h1v1h-1zM298 269h1v1h-1zM300 269h1v1h-1zM301 269h1v1h-1zM302 269h1v1h-1zM303 269h1v1h-1zM305 269h1v1h-1zM307 269h1v1h-1zM308 269h1v1h-1zM309 269h1v1h-1zM310 269h1v1h-1zM312 269h1v1h-1zM314 269h1v1h-1zM315 269h1v1h-1zM316 269h1v1h-1zM317 269h1v1h-1zM319 269h1v1h-1zM321 269h1v1h-1zM322 269h1v1h-1zM323 269h1v1h-1zM324 269h1v1h-1zM326 269h1v1h-1zM328 269h1v1h-1zM329 269h1v1h-1zM330 269h1v1h-1zM331 269h1v1h-1zM333 269h1v1h-1zM335 269h1v1h-1zM336 269h1v1h-1zM337 269h1v1h-1zM338 269h1v1h-1zM340 269h1v1h-1zM342 269h1v1h-1zM343 269h1v1h-1zM344 269h1v1h-1zM345 269h1v1h-1zM347 269h1v1h-1zM349 269h1v1h-1zM350 269h1v1h-1zM351 269h1v1h-1zM352 269h1v1h-1zM354 269h1v1h-1zM356 269h1v1h-1zM357 269h1v1h-1zM358 269h1v1h-1zM359 269h1v1h-1zM361 269h1v1h-1zM363 269h1v1h-1zM364 269h1v1h-1zM365 269h1v1h-1zM366 269h1v1h-1zM368 269h1v1h-1zM370 269h1v1h-1zM371 269h1v1h-1zM372 269h1v1h-1zM373 269h1v1h-1zM375 269h1v1h-1zM377 269h1v1h-1zM378 269h1v1h-1zM379 269h1v1h-1zM380 269h1v1h-1zM382 269h1v1h-1zM384 269h1v1h-1zM385 269h1v1h-1zM386 269h1v1h-1zM387 269h1v1h-1zM389 269h1v1h-1zM391 269h1v1h-1zM392 269h1v1h-1zM393 269h1v1h-1zM394 269h1v1h-1zM396 269h1v1h-1zM398 269h1v1h-1zM399 269h1v1h-1zM400 269h1v1h-1zM401 269h1v1h-1zM403 269h1v1h-1zM405 269h1v1h-1zM406 269h1v1h-1zM407 269h1v1h-1zM408 269h1v1h-1zM410 269h1v1h-1zM412 269h1v1h-1zM413 269h1v1h-1zM414 269h1v1h-1zM415 269h1v1h-1zM417 269h1v1h-1zM419 269h1v1h-1zM420 269h1v1h-1zM421 269h1v1h-1zM422 269h1v1h-1zM424 269h1v1h-1zM426 269h1v1h-1zM427 269h1v1h-1zM428 269h1v1h-1zM429 269h1v1h-1zM431 269h1v1h-1zM433 269h1v1h-1zM434 269h1v1h-1zM435 269h1v1h-1zM436 269h1v1h-1zM438 269h1v1h-1zM440 269h1v1h-1zM441 269h1v1h-1zM442 269h1v1h-1zM443 269h1v1h-1zM445 269h1v1h-1zM447 269h1v1h-1zM448 269h1v1h-1zM449 269h1v1h-1zM450 269h1v1h-1zM452 269h1v1h-1zM454 269h1v1h-1zM455 269h1v1h-1zM456 269h1v1h-1zM457 269h1v1h-1zM459 269h1v1h-1zM461 269h1v1h-1zM462 269h1v1h-1zM463 269h1v1h-1zM464 269h1v1h-1zM466 269h1v1h-1zM468 269h1v1h-1zM469 269h1v1h-1zM470 269h1v1h-1zM471 269h1v1h-1zM473 269h1v1h-1zM475 269h1v1h-1zM476 269h1v1h-1zM477 269h1v1h-1zM478 269h1v1h-1zM480 269h1v1h-1zM482 269h1v1h-1zM483 269h1v1h-1zM484 269h1v1h-1zM485 269h1v1h-1zM487 269h1v1h-1zM489 269h1v1h-1zM490 269h1v1h-1zM491 269h1v1h-1zM492 269h1v1h-1zM494 269h1v1h-1zM496 269h1v1h-1zM497 269h1v1h-1zM498 269h1v1h-1zM499 269h1v1h-1zM501 269h1v1h-1zM503 269h1v1h-1zM504 269h1v1h-1zM505 269h1v1h-1zM506 269h1v1h-1zM508 269h1v1h-1zM510 269h1v1h-1zM511 269h1v1h-1zM512 269h1v1h-1zM513 269h1v1h-1zM515 269h1v1h-1zM517 269h1v1h-1zM518 269h1v1h-1zM519 269h1v1h-1zM520 269h1v1h-1zM522 269h1v1h-1zM524 269h1v1h-1zM525 269h1v1h-1zM526 269h1v1h-1zM527 269h1v1h-1zM529 269h1v1h-1zM531 269h1v1h-1zM532 269h1v1h-1zM533 269h1v1h-1zM534 269h1v1h-1zM536 269h1v1h-1zM538 269h1v1h-1zM539 269h1v1h-1zM540 269h1v1h-1zM541 269h1v1h-1zM543 269h1v1h-1zM545 269h1v1h-1zM546 269h1v1h-1zM547 269h1v1h-1zM548 269h1v1h-1zM550 269h1v1h-1zM552 269h1v1h-1zM553 269h1v1h-1zM554 269h1v1h-1zM555 269h1v1h-1zM557 269h1v1h-1zM559 269h1v1h-1zM560 269h1v1h-1zM561 269h1v1h-1zM562 269h1v1h-1zM564 269h1v1h-1zM566 269h1v1h-1zM567 269h1v1h-1zM568 269h1v1h-1zM569 269h1v1h-1zM571 269h1v1h-1zM573 269h1v1h-1zM574 269h1v1h-1zM575 269h1v1h-1zM576 269h1v1h-1zM578 269h1v1h-1zM580 269h1v1h-1zM581 269h1v1h-1zM582 269h1v1h-1zM583 269h1v1h-1zM585 269h1v1h-1zM587 269h1v1h-1zM588 269h1v1h-1zM589 269h1v1h-1zM590 269h1v1h-1zM592 269h1v1h-1zM594 269h1v1h-1zM595 269h1v1h-1zM596 269h1v1h-1zM597 269h1v1h-1zM599 269h1v1h-1zM601 269h1v1h-1zM602 269h1v1h-1zM603 269h1v1h-1zM604 269h1v1h-1zM606 269h1v1h-1zM608 269h1v1h-1zM609 269h1v1h-1zM610 269h1v1h-1zM611 269h1v1h-1zM613 269h1v1h-1zM615 269h1v1h-1zM616 269h1v1h-1zM617 269h1v1h-1zM618 269h1v1h-1zM620 269h1v1h-1zM622 269h1v1h-1zM623 269h1v1h-1zM624 269h1v1h-1zM625 269h1v1h-1zM627 269h1v1h-1zM629 269h1v1h-1zM630 269h1v1h-1zM631 269h1v1h-1zM632 269h1v1h-1zM634 269h1v1h-1zM636 269h1v1h-1zM637 269h1v1h-1zM638 269h1v1h-1zM639 269h1v1h-1zM641 269h1v1h-1zM643 269h1v1h-1zM644 269h1v1h-1zM645 269h1v1h-1zM646 269h1v1h-1zM648 269h1v1h-1zM650 269h1v1h-1zM651 269h1v1h-1zM652 269h1v1h-1zM653 269h1v1h-1zM655 269h1v1h-1zM657 269h1v1h-1zM658 269h1v1h-1zM659 269h1v1h-1zM660 269h1v1h-1zM662 269h1v1h-1zM664 269h1v1h-1zM665 269h1v1h-1zM666 269h1v1h-1zM667 269h1v1h-1zM669 269h1v1h-1zM671 269h1v1h-1zM672 269h1v1h-1zM673 269h1v1h-1zM674 269h1v1h-1zM676 269h1v1h-1zM678 269h1v1h-1zM679 269h1v1h-1zM680 269h1v1h-1zM681 269h1v1h-1zM683 269h1v1h-1zM685 269h1v1h-1zM686 269h1v1h-1zM687 269h1v1h-1zM688 269h1v1h-1zM690 269h1v1h-1zM692 269h1v1h-1zM693 269h1v1h-1zM694 269h1v1h-1zM695 269h1v1h-1zM697 269h1v1h-1zM699 269h1v1h-1zM700 269h1v1h-1zM701 269h1v1h-1zM702 269h1v1h-1zM704 269h1v1h-1zM706 269h1v1h-1zM707 269h1v1h-1zM708 269h1v1h-1zM709 269h1v1h-1zM711 269h1v1h-1zM713 269h1v1h-1zM714 269h1v1h-1zM715 269h1v1h-1zM716 269h1v1h-1zM718 269h1v1h-1zM720 269h1v1h-1zM721 269h1v1h-1zM722 269h1v1h-1zM723 269h1v1h-1zM725 269h1v1h-1zM727 269h1v1h-1zM728 269h1v1h-1zM729 269h1v1h-1zM730 269h1v1h-1zM732 269h1v1h-1zM734 269h1v1h-1zM735 269h1v1h-1zM736 269h1v1h-1zM737 269h1v1h-1zM739 269h1v1h-1zM741 269h1v1h-1zM742 269h1v1h-1zM743 269h1v1h-1zM744 269h1v1h-1zM746 269h1v1h-1zM748 269h1v1h-1zM749 269h1v1h-1zM750 269h1v1h-1zM751 269h1v1h-1zM753 269h1v1h-1zM755 269h1v1h-1zM756 269h1v1h-1zM757 269h1v1h-1zM758 269h1v1h-1zM760 269h1v1h-1zM762 269h1v1h-1zM763 269h1v1h-1zM764 269h1v1h-1zM765 269h1v1h-1zM767 269h1v1h-1zM769 269h1v1h-1zM770 269h1v1h-1zM771 269h1v1h-1zM772 269h1v1h-1zM774 269h1v1h-1zM776 269h1v1h-1zM777 269h1v1h-1zM20 235h1v1h-1zM21 235h1v1h-1zM22 235h1v1h-1zM23 235h1v1h-1zM25 235h1v1h-1zM27 235h1v1h-1zM28 235h1v1h-1zM29 235h1v1h-1zM30 235h1v1h-1zM32 235h1v1h-1zM34 235h1v1h-1zM35 235h1v1h-1zM36 235h1v1h-1zM37 235h1v1h-1zM39 235h1v1h-1zM41 235h1v1h-1zM42 235h1v1h-1zM43 235h1v1h-1zM44 235h1v1h-1zM46 235h1v1h-1zM48 235h1v1h-1zM49 235h1v1h-1zM50 235h1v1h-1zM51 235h1v1h-1zM53 235h1v1h-1zM55 235h1v1h-1zM56 235h1v1h-1zM57 235h1v1h-1zM58 235h1v1h-1zM60 235h1v1h-1zM62 235h1v1h-1zM63 235h1v1h-1zM64 235h1v1h-1zM65 235h1v1h-1zM67 235h1v1h-1zM69 235h1v1h-1zM70 235h1v1h-1zM71 235h1v1h-1zM72 235h1v1h-1zM74 235h1v1h-1zM76 235h1v1h-1zM77 235h1v1h-1zM78 235h1v1h-1zM79 235h1v1h-1zM81 235h1v1h-1zM83 235h1v1h-1zM84 235h1v1h-1zM85 235h1v1h-1zM86 235h1v1h-1zM88 235h1v1h-1zM90 235h1v1h-1zM91 235h1v1h-1zM92 235h1v1h-1zM93 235h1v1h-1zM95 235h1v1h-1zM97 235h1v1h-1zM98 235h1v1h-1zM99 235h1v1h-1zM100 235h1v1h-1zM102 235h1v1h-1zM104 235h1v1h-1zM105 235h1v1h-1zM106 235h1v1h-1zM107 235h1v1h-1zM109 235h1v1h-1zM111 235h1v1h-1zM112 235h1v1h-1zM113 235h1v1h-1zM114 235h1v1h-1zM116 235h1v1h-1zM118 235h1v1h-1zM119 235h1v1h-1zM120 235h1v1h-1zM121 235h1v1h-1zM123 235h1v1h-1zM125 235h1v1h-1zM126 235h1v1h-1zM127 235h1v1h-1zM128 235h1v1h-1zM130 235h1v1h-1zM132 235h1v1h-1zM133 235h1v1h-1zM134 235h1v1h-1zM135 235h1v1h-1zM137 235h1v1h-1zM139 235h1v1h-1zM140 235h1v1h-1zM141 235h1v1h-1zM142 235h1v1h-1zM144 235h1v1h-1zM146 235h1v1h-1zM147 235h1v1h-1zM148 235h1v1h-1zM149 235h1v1h-1zM151 235h1v1h-1zM153 235h1v1h-1zM154 235h1v1h-1zM155 235h1v1h-1zM156 235h1v1h-1zM158 235h1v1h-1zM160 235h1v1h-1zM161 235h1v1h-1zM162 235h1v1h-1zM163 235h1v1h-1zM165 235h1v1h-1zM167 235h1v1h-1zM168 235h1v1h-1zM169 235h1v1h-1zM170 235h1v1h-1zM172 235h1v1h-1zM174 235h1v1h-1zM175 235h1v1h-1zM176 235h1v1h-1zM177 235h1v1h-1zM179 235h1v1h-1zM181 235h1v1h-1zM182 235h1v1h-1zM183 235h1v1h-1zM184 235h1v1h-1zM186 235h1v1h-1zM188 235h1v1h-1zM189 235h1v1h-1zM190 235h1v1h-1zM191 235h1v1h-1zM193 235h1v1h-1zM195 235h1v1h-1zM196 235h1v1h-1zM197 235h1v1h-1zM198 235h1v1h-1zM200 235h1v1h-1zM202 235h1v1h-1zM203 235h1v1h-1zM204 235h1v1h-1zM205 235h1v1h-1zM207 235h1v1h-1zM209 235h1v1h-1zM210 235h1v1h-1zM211 235h1v1h-1zM212 235h1v1h-1zM214 235h1v1h-1zM216 235h1v1h-1zM217 235h1v1h-1zM218 235h1v1h-1zM219 235h1v1h-1zM221 235h1v1h-1zM223 235h1v1h-1zM224 235h1v1h-1zM225 235h1v1h-1zM226 235h1v1h-1zM228 235h1v1h-1zM230 235h1v1h-1zM231 235h1v1h-1zM232 235h1v1h-1zM233 235h1v1h-1zM235 235h1v1h-1zM237 235h1v1h-1zM238 235h1v1h-1zM239 235h1v1h-1zM240 235h1v1h-1zM242 235h1v1h-1zM244 235h1v1h-1zM245 235h1v1h-1zM246 235h1v1h-1zM247 235h1v1h-1zM249 235h1v1h-1zM251 235h1v1h-1zM252 235h1v1h-1zM253 235h1v1h-1zM254 235h1v1h-1zM256 235h1v1h-1zM258 235h1v1h-1zM259 235h1v1h-1zM260 235h1v1h-1zM261 235h1v1h-1zM263 235h1v1h-1zM265 235h1v1h-1zM266 235h1v1h-1zM267 235h1v1h-1zM268 235h1v1h-1zM270 235h1v1h-1zM272 235h1v1h-1zM273 235h1v1h-1zM274 235h1v1h-1zM275 235h1v1h-1zM277 235h1v1h-1zM279 235h1v1h-1zM280 235h1v1h-1zM281 235h1v1h-1zM282 235h1v1h-1zM284 235h1v1h-1zM286 235h1v1h-1zM287 235h1v1h-1zM288 235h1v1h-1zM289 235h1v1h-1zM291 235h1v1h-1zM293 235h1v1h-1zM294 235h1v1h-1zM295 235h1v1h-1zM296 235h1v1h-1zM298 235h1v1h-1zM300 235h1v1h-1zM301 235h1v1h-1zM302 235h1v1h-1zM303 235h1v1h-1zM305 235h1v1h-1zM307 235h1v1h-1zM308 235h1v1h-1zM309 235h1v1h-1zM310 235h1v1h-1zM312 235h1v1h-1zM314 235h1v1h-1zM315 235h1v1h-1zM316 235h1v1h-1zM317 235h1v1h-1zM319 235h1v1h-1zM321 235h1v1h-1zM322 235h1v1h-1zM323 235h1v1h-1zM324 235h1v1h-1zM326 235h1v1h-1zM328 235h1v1h-1zM329 235h1v1h-1zM330 235h1v1h-1zM331 235h1v1h-1zM333 235h1v1h-1zM335 235h1v1h-1zM336 235h1v1h-1zM337 235h1v1h-1zM338 235h1v1h-1zM340 235h1v1h-1zM342 235h1v1h-1zM343 235h1v1h-1zM344 235h1v1h-1zM345 235h1v1h-1zM347 235h1v1h-1zM349 235h1v1h-1zM350 235h1v1h-1zM351 235h1v1h-1zM352 235h1v1h-1zM354 235h1v1h-1zM356 235h1v1h-1zM357 235h1v1h-1zM358 235h1v1h-1zM359 235h1v1h-1zM361 235h1v1h-1zM363 235h1v1h-1zM364 235h1v1h-1zM365 235h1v1h-1zM366 235h1v1h-1zM368 235h1v1h-1zM370 235h1v1h-1zM371 235h1v1h-1zM372 235h1v1h-1zM373 235h1v1h-1zM375 235h1v1h-1zM377 235h1v1h-1zM378 235h1v1h-1zM379 235h1v1h-1zM380 235h1v1h-1zM382 235h1v1h-1zM384 235h1v1h-1zM385 235h1v1h-1zM386 235h1v1h-1zM387 235h1v1h-1zM389 235h1v1h-1zM391 235h1v1h-1zM392 235h1v1h-1zM393 235h1v1h-1zM394 235h1v1h-1zM396 235h1v1h-1zM398 235h1v1h-1zM399 235h1v1h-1zM400 235h1v1h-1zM401 235h1v1h-1zM403 235h1v1h-1zM405 235h1v1h-1zM406 235h1v1h-1zM407 235h1v1h-1zM408 235h1v1h-1zM410 235h1v1h-1zM412 235h1v1h-1zM413 235h1v1h-1zM414 235h1v1h-1zM415 235h1v1h-1zM417 235h1v1h-1zM419 235h1v1h-1zM420 235h1v1h-1zM421 235h1v1h-1zM422 235h1v1h-1zM424 235h1v1h-1zM426 235h1v1h-1zM427 235h1v1h-1zM428 235h1v1h-1zM429 235h1v1h-1zM431 235h1v1h-1zM433 235h1v1h-1zM434 235h1v1h-1zM435 235h1v1h-1zM436 235h1v1h-1zM438 235h1v1h-1zM440 235h1v1h-1zM441 235h1v1h-1zM442 235h1v1h-1zM443 235h1v1h-1zM445 235h1v1h-1zM447 235h1v1h-1zM448 235h1v1h-1zM449 235h1v1h-1zM450 235h1v1h-1zM452 235h1v1h-1zM454 235h1v1h-1zM455 235h1v1h-1zM456 235h1v1h-1zM457 235h1v1h-1zM459 235h1v1h-1zM461 235h1v1h-1zM462 235h1v1h-1zM463 235h1v1h-1zM464 235h1v1h-1zM466 235h1v1h-1zM468 235h1v1h-1zM469 235h1v1h-1zM470 235h1v1h-1zM471 235h1v1h-1zM473 235h1v1h-1zM475 235h1v1h-1zM476 235h1v1h-1zM477 235h1v1h-1zM478 235h1v1h-1zM480 235h1v1h-1zM482 235h1v1h-1zM483 235h1v1h-1zM484 235h1v1h-1zM485 235h1v1h-1zM487 235h1v1h-1zM489 235h1v1h-1zM490 235h1v1h-1zM491 235h1v1h-1zM492 235h1v1h-1zM494 235h1v1h-1zM496 235h1v1h-1zM497 235h1v1h-1zM498 235h1v1h-1zM499 235h1v1h-1zM501 235h1v1h-1zM503 235h1v1h-1zM504 235h1v1h-1zM505 235h1v1h-1zM506 235h1v1h-1zM508 235h1v1h-1zM510 235h1v1h-1zM511 235h1v1h-1zM512 235h1v1h-1zM513 235h1v1h-1zM515 235h1v1h-1zM517 235h1v1h-1zM518 235h1v1h-1zM519 235h1v1h-1zM520 235h1v1h-1zM522 235h1v1h-1zM524 235h1v1h-1zM525 235h1v1h-1zM526 235h1v1h-1zM527 235h1v1h-1zM529 235h1v1h-1zM531 235h1v1h-1zM532 235h1v1h-1zM533 235h1v1h-1zM534 235h1v1h-1zM536 235h1v1h-1zM538 235h1v1h-1zM539 235h1v1h-1zM540 235h1v1h-1zM541 235h1v1h-1zM543 235h1v1h-1zM545 235h1v1h-1zM546 235h1v1h-1zM547 235h1v1h-1zM548 235h1v1h-1zM550 235h1v1h-1zM552 235h1v1h-1zM553 235h1v1h-1zM554 235h1v1h-1zM555 235h1v1h-1zM557 235h1v1h-1zM559 235h1v1h-1zM560 235h1v1h-1zM561 235h1v1h-1zM562 235h1v1h-1zM564 235h1v1h-1zM566 235h1v1h-1zM567 235h1v1h-1zM568 235h1v1h-1zM569 235h1v1h-1zM571 235h1v1h-1zM573 235h1v1h-1zM574 235h1v1h-1zM575 235h1v1h-1zM576 235h1v1h-1zM578 235h1v1h-1zM580 235h1v1h-1zM581 235h1v1h-1zM582 235h1v1h-1zM583 235h1v1h-1zM585 235h1v1h-1zM587 235h1v1h-1zM588 235h1v1h-1zM589 235h1v1h-1zM590 235h1v1h-1zM592 235h1v1h-1zM594 235h1v1h-1zM595 235h1v1h-1zM596 235h1v1h-1zM597 235h1v1h-1zM599 235h1v1h-1zM601 235h1v1h-1zM602 235h1v1h-1zM603 235h1v1h-1zM604 235h1v1h-1zM606 235h1v1h-1zM608 235h1v1h-1zM609 235h1v1h-1zM610 235h1v1h-1zM611 235h1v1h-1zM613 235h1v1h-1zM615 235h1v1h-1zM616 235h1v1h-1zM617 235h1v1h-1zM618 235h1v1h-1zM620 235h1v1h-1zM622 235h1v1h-1zM623 235h1v1h-1zM624 235h1v1h-1zM625 235h1v1h-1zM627 235h1v1h-1zM629 235h1v1h-1zM630 235h1v1h-1zM631 235h1v1h-1zM632 235h1v1h-1zM634 235h1v1h-1zM636 235h1v1h-1zM637 235h1v1h-1zM638 235h1v1h-1zM639 235h1v1h-1zM641 235h1v1h-1zM643 235h1v1h-1zM644 235h1v1h-1zM645 235h1v1h-1zM646 235h1v1h-1zM648 235h1v1h-1zM650 235h1v1h-1zM651 235h1v1h-1zM652 235h1v1h-1zM653 235h1v1h-1zM655 235h1v1h-1zM657 235h1v1h-1zM658 235h1v1h-1zM659 235h1v1h-1zM660 235h1v1h-1zM662 235h1v1h-1zM664 235h1v1h-1zM665 235h1v1h-1zM666 235h1v1h-1zM667 235h1v1h-1zM669 235h1v1h-1zM671 235h1v1h-1zM672 235h1v1h-1zM673 235h1v1h-1zM674 235h1v1h-1zM676 235h1v1h-1zM678 235h1v1h-1zM679 235h1v1h-1zM680 235h1v1h-1zM681 235h1v1h-1zM683 235h1v1h-1zM685 235h1v1h-1zM686 235h1v1h-1zM687 235h1v1h-1zM688 235h1v1h-1zM690 235h1v1h-1zM692 235h1v1h-1zM693 235h1v1h-1zM694 235h1v1h-1zM695 235h1v1h-1zM697 235h1v1h-1zM699 235h1v1h-1zM700 235h1v1h-1zM701 235h1v1h-1zM702 235h1v1h-1zM704 235h1v1h-1zM706 235h1v1h-1zM707 235h1v1h-1zM708 235h1v1h-1zM709 235h1v1h-1zM711 235h1v1h-1zM713 235h1v1h-1zM714 235h1v1h-1zM715 235h1v1h-1zM716 235h1v1h-1zM718 235h1v1h-1zM720 235h1v1h-1zM721 235h1v1h-1zM722 235h1v1h-1zM723 235h1v1h-1zM725 235h1v1h-1zM727 235h1v1h-1zM728 235h1v1h-1zM729 235h1v1h-1zM730 235h1v1h-1zM732 235h1v1h-1zM734 235h1v1h-1zM735 235h1v1h-1zM736 235h1v1h-1zM737 235h1v1h-1zM739 235h1v1h-1zM741 235h1v1h-1zM742 235h1v1h-1zM743 235h1v1h-1zM744 235h1v1h-1zM746 235h1v1h-1zM748 235h1v1h-1zM749 235h1v1h-1zM750 235h1v1h-1zM751 235h1v1h-1zM753 235h1v1h-1zM755 235h1v1h-1zM756 235h1v1h-1zM757 235h1v1h-1zM758 235h1v1h-1zM760 235h1v1h-1zM762 235h1v1h-1zM763 235h1v1h-1zM764 235h1v1h-1zM765 235h1v1h-1zM767 235h1v1h-1zM769 235h1v1h-1zM770 235h1v1h-1zM771 235h1v1h-1zM772 235h1v1h-1zM774 235h1v1h-1zM776 235h1v1h-1zM777 235h1v1h-1z" fill="#e000f0"/><path d="M0.5 261.5H15L19.5 269.5L15 277.5H0.5Z" fill="#000" stroke="#f00000" stroke-width="1.6"/><path d="M7.8 265H9.8V275.6H7.8V268.2L4.6 269.8V267.8Z" fill="#f00000" shape-rendering="auto"/><path d="M780 269.5L794 263.5V276Z" fill="#9a20e0"/></svg>
<svg width="800" height="600" viewBox="0 0 800 600" style="will-change:transform"><rect x="0" y="0" width="800" height="1" rx="0" fill="#000"/><circle cx="16.8" cy="9.7" r="6.4" fill="none" stroke="#e8a000" stroke-width="2.9"/><path d="M27 2V11.8A4.4 4.4 0 0 0 35.8 11.8V2M35.8 11.8A4.4 4.4 0 0 0 44.6 11.8V2" fill="none" stroke="#000" stroke-width="3.1"/><ellipse cx="55.5" cy="9.75" rx="6.8" ry="6.1" fill="none" stroke="#000" stroke-width="3.4"/><path d="M66.5 17.6V8A4.5 4.5 0 0 1 75.5 8V17.6" fill="none" stroke="#000" stroke-width="3.1"/><rect x="120" y="1" width="81" height="18" rx="9" fill="#e00000"/><text x="140" y="15" fill="#000" font-size="15" letter-spacing="1" text-anchor="start">Stop</text><rect x="250" y="1" width="300" height="18" rx="9" fill="#000"/><rect x="260" y="9" width="281" height="1" rx="0" fill="#f0f000"/><rect x="398" y="2" width="4" height="17" rx="0" fill="#a0a0a0"/><path d="M397.5 2h6v2h-2v3h-2v-3h-2z" fill="#ff00ff"/><path d="M395.5 21.5H407V31L401.25 34.5L395.5 31Z" fill="#000" stroke="#8020e0" stroke-width="1.8"/><path d="M398 24.5h7v1.5h-2.75v6h-1.5v-6H398z" fill="#b040ff"/><rect x="559" y="1" width="110" height="18" rx="9" fill="#000"/><path d="M564.5 3.8H576V14L570.25 17.5L564.5 14Z" fill="#000" stroke="#8020e0" stroke-width="1.8"/><path d="M566.5 6.5h8v1.5h-3.25v6h-1.5v-6H566.5z" fill="#b040ff"/><text x="579" y="16" fill="#ececec" font-size="15" letter-spacing="1" text-anchor="start">0.000ns</text><path d="M755.5 2.5L758.5 4.8L761 3L763.3 4.2L763.3 7.2L760.2 10.6L756 8Z" fill="#10b010"/><path d="M756.3 3.8L758.4 5.8L757.5 7.5Z" fill="#60e040"/><path d="M757.5 11.2L764.2 8L768.3 12.6L761 16.8Z" fill="#c8c4d8" stroke="#1c2040" stroke-width="0.9"/><path d="M760 11.5h2v1.6h-2zM763 10h2v1.6h-2z" fill="#303050"/><path d="M26 517.5V450H207A4 4 0 0 1 211.5 454V517.5" fill="#000" stroke="#68a0b8" stroke-width="2"/><rect x="25" y="517" width="188" height="2" rx="0" fill="#68a0b8"/><circle cx="35" cy="459" r="8" fill="#e80000"/><path d="M34.5 453.8H36.4V464.5H34.5V456.6L32.4 457.8V456Z" fill="#000"/><path d="M44.5 464.5L48.75 459L53 464.5Z" fill="none" stroke="#ececec" stroke-width="1"/><text x="53" y="466" fill="#ececec" font-size="15" letter-spacing="1" text-anchor="start">y:340.0mV</text><text x="43" y="488" fill="#ececec" font-size="15" letter-spacing="1" text-anchor="start">y1:340.0mV</text><text x="43" y="510" fill="#ececec" font-size="15" letter-spacing="1" text-anchor="start">y2:0.0mV</text><rect x="0" y="519" width="319" height="81" rx="0" fill="#5fa3a3"/><rect x="1" y="520" width="208" height="39" rx="0" fill="#0080e0"/><rect x="1" y="520" width="208" height="19" rx="4" fill="#000"/><rect x="1" y="539" width="208" height="1" rx="0" fill="#0a4a80"/><rect x="1" y="540" width="208" height="19" rx="4" fill="#000"/><rect x="211" y="520" width="106" height="39" rx="0" fill="#0080e0"/><rect x="211" y="520" width="106" height="39" rx="5" fill="#000"/><rect x="1" y="561" width="316" height="36" rx="0" fill="#0080e0"/><rect x="1" y="561" width="316" height="36" rx="5" fill="#000"/><circle cx="10.3" cy="530" r="7.5" fill="#e80000"/><path d="M9.8 524.8H11.700000000000001V535.5H9.8V527.6L7.700000000000001 528.8V527Z" fill="#000"/><circle cx="10.3" cy="549.4" r="7.5" fill="#f0f000"/><text x="10.3" y="554.4" fill="#000" font-size="14" font-weight="bold" style="font-family:'Liberation Sans'" text-anchor="middle">2</text><text x="17" y="536" fill="#f00000" font-size="15" letter-spacing="1" text-anchor="start">500mV-</text><text x="105" y="536" fill="#f00000" font-size="15" letter-spacing="1" text-anchor="start">0.00div</text><text x="17" y="556" fill="#f0f000" font-size="15" letter-spacing="1" text-anchor="start">5V-</text><text x="105" y="556" fill="#f0f000" font-size="15" letter-spacing="1" text-anchor="start">0.00div</text><text x="229" y="535" fill="#ececec" font-size="15" letter-spacing="1" text-anchor="start">(1GS/s)</text><text x="218" y="554" fill="#ececec" font-size="15" letter-spacing="1" text-anchor="start">Depth:10M</text><circle cx="9.5" cy="570" r="7.5" fill="#e80000"/><path d="M9.0 564.8H10.9V575.5H9.0V567.6L6.9 568.8V567Z" fill="#000"/><circle cx="9.5" cy="588.5" r="7.5" fill="#e80000"/><path d="M9.0 583.3H10.9V594.0H9.0V586.1L6.9 587.3V585.5Z" fill="#000"/><text x="20" y="575" fill="#f00000" font-size="15" letter-spacing="1" text-anchor="start">F:77.03KHz</text><text x="20" y="594" fill="#f00000" font-size="15" letter-spacing="1" text-anchor="start">Vk:244.0mv</text><circle cx="168" cy="570.5" r="7.5" fill="#e80000"/><path d="M167.5 565.3H169.4V576.0H167.5V568.1L165.4 569.3V567.5Z" fill="#000"/><circle cx="168" cy="589" r="7.5" fill="#f0f000"/><text x="168" y="594" fill="#000" font-size="14" font-weight="bold" style="font-family:'Liberation Sans'" text-anchor="middle">2</text><text x="180" y="576" fill="#f00000" font-size="15" letter-spacing="1" text-anchor="start">+D:1.7%</text><text x="180" y="594" fill="#f0f000" font-size="15" letter-spacing="1" text-anchor="start">F:OFF</text><rect x="319" y="538" width="481" height="62" rx="0" fill="#0060a0"/><rect x="319" y="599" width="481" height="1" rx="0" fill="#0080e0"/><rect x="319" y="520" width="100" height="18" rx="9" fill="#000"/><text x="337" y="535" fill="#ececec" font-size="15" letter-spacing="1" text-anchor="start">M:10us</text><rect x="664" y="520" width="130" height="18" rx="9" fill="#000"/><circle cx="675.5" cy="528.5" r="8" fill="#e80000"/><path d="M675.0 523.3H676.9V534.0H675.0V526.1L672.9 527.3V525.5Z" fill="#000"/><path d="M685 535.5H693.5L697.5 522.5H704.5" fill="none" stroke="#d8d8e8" stroke-width="1"/><text x="707" y="535" fill="#ececec" font-size="15" letter-spacing="1" text-anchor="start">0.00mV</text><rect x="321" y="540" width="93" height="58" rx="0" fill="#0048b0"/><rect x="323" y="540" width="91" height="1" rx="0" fill="#0060a0"/><rect x="323" y="541" width="90" height="56" rx="2" fill="#003a68"/><rect x="323" y="541" width="88" height="54" rx="2" fill="#68b0f0"/><rect x="324" y="543" width="87" height="52" rx="1" fill="#0080e0"/><rect x="596" y="540" width="92" height="58" rx="0" fill="#0048b0"/><rect x="598" y="540" width="90" height="1" rx="0" fill="#0060a0"/><rect x="598" y="541" width="89" height="56" rx="2" fill="#003a68"/><rect x="598" y="541" width="87" height="54" rx="2" fill="#68b0f0"/><rect x="599" y="543" width="86" height="52" rx="1" fill="#0080e0"/><text x="345" y="562" fill="#000" font-size="15" letter-spacing="1" text-anchor="start">Type</text><rect x="341" y="571" width="50" height="20" rx="0" fill="#e0e0e0"/><text x="341" y="586" fill="#000" font-size="15" letter-spacing="1" text-anchor="start">Image</text><text x="620" y="574" fill="#000" font-size="15" letter-spacing="1" text-anchor="start">Save</text></svg>
</body></html>
